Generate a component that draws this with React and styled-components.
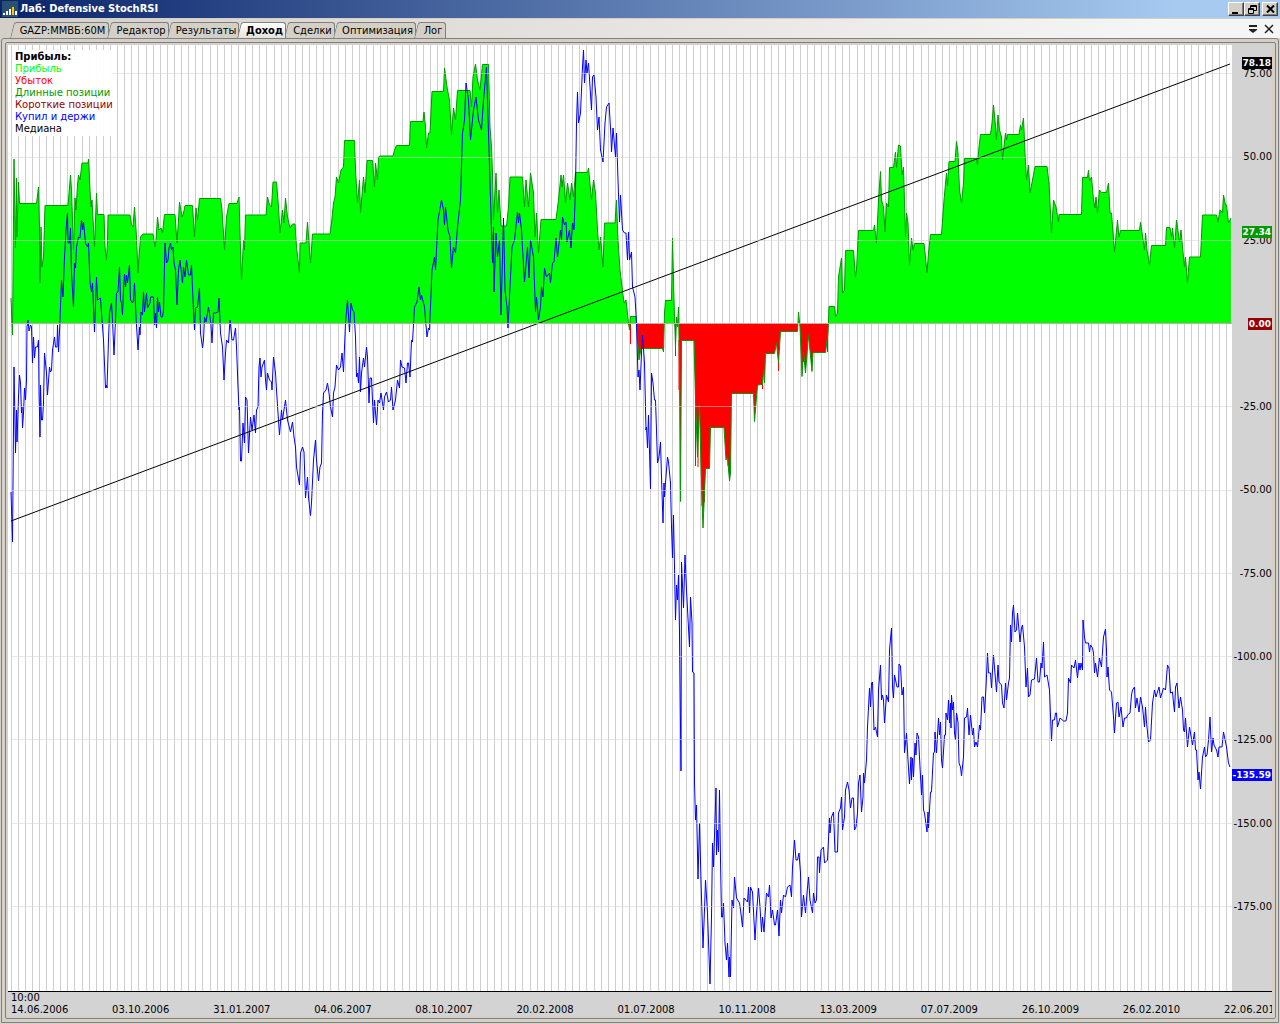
import { useState } from "react";
import styled, { createGlobalStyle, css } from "styled-components";

const GlobalStyle = createGlobalStyle`
  * {
    box-sizing: border-box;
  }

  body {
    margin: 0;
    background: #d4d0c8;
    font-family: "DejaVu Sans Condensed", "DejaVu Sans", sans-serif;
    font-size: 11px;
    color: #000;
  }

  button {
    font: inherit;
    color: inherit;
    padding: 0;
  }
`;

const Window = styled.div`
  display: flex;
  flex-direction: column;
  height: 100vh;
  min-height: 480px;
`;

const TitleBar = styled.header`
  flex: none;
  display: flex;
  align-items: center;
  gap: 2px;
  height: 18px;
  padding: 0 2px;
  background: linear-gradient(to right, #0a246a, #a6caf0 92%);
`;

const Title = styled.h1`
  flex: 1;
  margin: 0;
  font-size: 11px;
  line-height: 16px;
  color: #fff;
`;

const WindowButtons = styled.div`
  display: flex;
`;

const WindowButton = styled.button`
  display: flex;
  align-items: center;
  justify-content: center;
  width: 16px;
  height: 14px;
  margin-left: ${(props) => (props.$apart ? "2px" : "0")};
  border: 1px solid;
  border-color: #fff #404040 #404040 #fff;
  background: #d4d0c8;
  box-shadow: inset -1px -1px 0 #808080;
`;

const TabStrip = styled.nav`
  flex: none;
  display: flex;
  align-items: flex-end;
  height: 20px;
  padding: 0 6px 0 12px;
  border-top: 1px solid #d4d0c8;
  background: linear-gradient(to right, #d4d0c8, #f5f5f5 90%);
`;

const Tab = styled.button`
  position: relative;
  z-index: 0;
  flex: none;
  width: ${(props) => props.$width}px;
  height: 16px;
  padding-left: 4px;
  border: 0;
  background: none;
  line-height: 15px;
  white-space: nowrap;

  &::before,
  &::after {
    content: "";
    position: absolute;
    z-index: -1;
    top: 0;
    bottom: 0;
    border-top: 1px solid #808080;
    background: #d4d0c8;
  }

  &::before {
    left: 0;
    width: 12px;
    border-left: 1px solid #808080;
    border-top-left-radius: 3px;
    transform: skewX(-14deg);
  }

  &::after {
    left: 5px;
    right: 0;
    border-right: 1px solid #808080;
    border-top-right-radius: 3px;
  }

  ${(props) =>
    props.$active &&
    css`
      z-index: 1;
      font-weight: bold;

      &::before,
      &::after {
        background: linear-gradient(#fff, #e4e2dc);
      }
    `}
`;

const StripTools = styled.div`
  display: flex;
  align-items: center;
  gap: 6px;
  height: 18px;
  margin-left: auto;
`;

const StripButton = styled.button`
  display: flex;
  border: 0;
  background: none;
`;

const Frame = styled.main`
  flex: 1;
  display: flex;
  min-height: 0;
  margin: 0 1px 1px;
  padding: 3px 2px 3px 3px;
  border: 1px solid #808080;
  border-radius: 3px 3px 0 0;
`;

const Panel = styled.section`
  flex: 1;
  display: flex;
  flex-direction: column;
  min-width: 0;
  padding: 2px 3px 2px 2px;
  border: 1px solid #808080;
  border-radius: 2px;
  font-family: "DejaVu Sans", sans-serif;
  font-size: 10px;
  line-height: 12px;
`;

const ChartRow = styled.div`
  flex: 1;
  display: flex;
  min-height: 0;
  border-bottom: 1px solid #000;
`;

const Plot = styled.div`
  position: relative;
  flex: 1;
  display: flex;
  min-width: 0;
  background: #fff;
`;

const Drawing = styled.svg`
  flex: 1;
  min-width: 0;
  height: 100%;
`;

const Legend = styled.ul`
  position: absolute;
  top: 5px;
  left: 4px;
  margin: 0;
  padding: 1px 0 1px 3px;
  list-style: none;
  background: rgba(255, 255, 255, 0.95);
`;

const LegendItem = styled.li`
  color: ${(props) => props.$color};
  font-weight: ${(props) => (props.$bold ? "bold" : "normal")};
`;

const PriceAxis = styled.div`
  position: relative;
  flex: none;
  display: flex;
  flex-direction: column;
  justify-content: space-between;
  width: 40px;
  padding: 23px 0 78px;
  background: #d3d3d3;
  text-align: right;
`;

const Badge = styled.div`
  position: absolute;
  right: 0;
  height: 12px;
  margin-top: -6px;
  padding: 0 1px;
  background: ${(props) => props.$color};
  color: #fff;
  font-size: 9px;
  font-weight: bold;
`;

const DateAxis = styled.div`
  flex: none;
  padding-left: 3px;
  background: #d3d3d3;
`;

const Dates = styled.div`
  display: flex;
`;

const DateLabel = styled.div`
  flex: 1;
  min-width: 0;
  overflow: hidden;

  &:last-child {
    flex: 0 0 48px;
  }
`;

const TABS = [
  { label: "GAZP:ММВБ:60М", width: 97 },
  { label: "Редактор", width: 60 },
  { label: "Результаты", width: 70 },
  { label: "Доход", width: 47 },
  { label: "Сделки", width: 49 },
  { label: "Оптимизация", width: 81 },
  { label: "Лог", width: 30 },
];

const LEGEND = [
  { label: "Прибыль:", color: "#000", bold: true },
  { label: "Прибыль", color: "#00ff00" },
  { label: "Убыток", color: "#ff0000" },
  { label: "Длинные позиции", color: "#009900" },
  { label: "Короткие позиции", color: "#990000" },
  { label: "Купил и держи", color: "#0000ff" },
  { label: "Медиана", color: "#000" },
];

const LEVELS = [75, 50, 25, 0, -25, -50, -75, -100, -125, -150, -175];

const BADGES = [
  { value: 78.18, color: "#000" },
  { value: 27.34, color: "#009900" },
  { value: 0, color: "#990000" },
  { value: -135.59, color: "#0000ff" },
];

const DATES = [
  "14.06.2006",
  "03.10.2006",
  "31.01.2007",
  "04.06.2007",
  "08.10.2007",
  "20.02.2008",
  "01.07.2008",
  "10.11.2008",
  "13.03.2009",
  "07.07.2009",
  "26.10.2009",
  "26.02.2010",
  "22.06.2010",
];

// drawing units: the plot spans x 8..1232 and y 45..991
const ZERO = 323.5;
const UNIT = 3.33;
const levelY = (value) => ZERO - value * UNIT;
const levelTop = (value) => `${((levelY(value) - 45) / 946) * 100}%`;

const GRID = Array.from({ length: 172 }, (_, i) => Math.floor(11 + i * 7.11));

const PROFIT = `11,298 12.5,335 14,159 15.5,248 16.5,178 17,237 18.5,182 19.5,203.5
36.5,203.5 38.5,187 39.5,230 40,283 41,227 42,267 43.5,257 45,205.5 68,205.5 70.5,175
71.5,190 73.5,250 75,198 76,210 77.5,185 78.5,175 80,180 82,163 88,163 88.5,159 90,190
91,207 92,200 94.5,247 96.5,193 97.5,215 99,214.5 104,214.5 105,247 106.5,260 107.5,240
108,215 130,215 131.5,225 133,227 134.5,207 136.5,237 138,273 139,257 140.5,237 143,234
153,234 155,247 156,240 157.5,217 159,230 161,228 162.5,233 164.5,214.5 175,214.5
177,243 178.5,220 179.5,202 182,217 183.5,213 185,205.5 192.5,205.5 194.5,237 196,208
197.5,220 199.5,198.5 220.5,198.5 222,210 224.5,250 226.5,217 229,203.5 237,203.5
239,197 240,233 241.5,280 243.5,240 244.5,250 245.5,215 266,215 267.5,197 269.5,205
271.5,207 273,182 276.5,182 278.5,207 280,233 282.5,210 284,223 285.5,198 287.5,217
290,228 292.5,224 295,224 296.5,247 299.5,273 300,243 306,243 307.5,222 310.5,263
312.5,234 330,234 331.5,223 333.5,203 335,197 336.5,177 338.5,183 341,170 343.5,167
344.5,140.5 354.5,140.5 355.5,170 357.5,203 359.5,180 360.5,213 363.5,177 365,193
367,160.5 372.5,160.5 374.5,187 375.5,163 377.5,180 378.5,157 380,156 393,156 394.5,150
396.5,145.5 409.5,145.5 410.5,121.5 423,121.5 424,112 425.5,127 426.5,148 428.5,133
430,133 432,91.5 443.5,91.5 444.5,68 447,87 449.5,100 451.5,135 453.5,108 455.5,120
457.5,90.5 470,90.5 471.5,107 473,77 475.5,64 477.5,80 480,90 482.5,64.5 488.5,64.5
490,127 491.5,147 492.5,173 493.5,220 496,173 497.5,213 499,190 501,226 506.5,226
508.5,207 510,177 522.5,177 524.5,207 526,180 528.5,207 530.5,173 533.5,193 535,237
536.5,213 538.5,253 541,219.5 556,219.5 558.5,200 561,175 562,187 563.5,175 565.5,203
567.5,183 570,200 571.5,183 573.5,197 575.5,172.5 587.5,172.5 588.5,168 591.5,200
593.5,180 595.5,193 597.5,230 599,250 600.5,237 603,267 604.5,223 615,223 616.5,200
618,240 620,270 622,287 624,303 626,300 628.5,323 629.5,330 630.5,316.5 636,316.5
636.5,323.5 639,360 641,348.5 662.5,348.5 663.5,352 664.5,313 665.5,300.5 671.5,300.5
672.5,238 674,300 675.5,347 676.5,317 677.5,327 678.5,307 679.5,367 680.5,501.5
681.5,340.5 694,340.5 695.5,400 697.5,457 699.5,403 701,467 703,528 704.5,493
705.5,468.5 709.5,468.5 710.5,427.5 724,427.5 726,460 727.5,457 729.5,481 730.5,473
731.5,393.5 753.5,393.5 754.5,421.5 757.5,385 762.5,384.5 763.5,370 764.5,383
765.5,353.5 774.5,353.5 776.5,343 778.5,363 780.5,331.5 797.5,331.5 798.5,312 800,327
802,376.5 803.5,352 805.5,373 808.5,335 812,371.5 813,352.5 825.5,352.5 828,333
829,306.5 834.5,306.5 835.5,317 837.5,313 838.5,277 841.5,258 842.5,293 844.5,290
845.5,250.5 853.5,250.5 855.5,277 856.5,270 858.5,230.5 873.5,230.5 874.5,225 876.5,243
878.5,200 880.5,171.5 881.5,200 883.5,207 885,232 886.5,203 888.5,207 889.5,167.5
893.5,167.5 895.5,152 896.5,168 898.5,145 900.5,146 902,175 903.5,167 905.5,237
906.5,213 908,223 909.5,265 911.5,238 913,250 914.5,243.5 924,243.5 925.5,257 927,273
928.5,253 930.5,234.5 941.5,234.5 944,200 946.5,173 947.5,186 949,161.5 955,161.5
956.5,141.5 958,153 959.5,190 961.5,203 963.5,183 964.5,158.5 976.5,158.5 977.5,165
979,147 980.5,134.5 990.5,134.5 992,123 993.5,105 995,120 996.5,140 998,115 999.5,130
1001.5,137 1002.5,160 1005.5,133 1006.5,140 1007.5,134.5 1019,134.5 1020.5,125
1021.5,130 1023.5,118 1025,153 1026.5,180 1028.5,165 1030,193 1032.5,180 1035,166.5
1047,166.5 1049,183 1051.5,233 1053.5,200 1056,207 1058.5,222 1059,214.5 1081.5,214.5
1082.5,177.5 1087.5,177.5 1088.5,170 1089.5,181 1091.5,177 1093.5,200 1095,208
1096,197 1097.5,213 1099.5,190 1101.5,192.5 1106.5,192.5 1108.5,183 1110,213
1111.5,213 1114.5,252 1117.5,220 1119,237 1120.5,230.5 1139.5,230.5 1140.5,222
1144.5,250 1145.5,233 1147,250 1149.5,265 1151.5,245.5 1165.5,245.5 1166.5,227.5
1170,227.5 1171.5,237 1172.5,228 1174.5,248 1176.5,220 1179.5,242 1181,230 1182.5,247
1184.5,267 1185.5,257 1187.5,283 1189.5,257 1200.5,257 1202.5,215 1216.5,215 1218,222
1220,210 1222.5,213 1223.5,195 1225.5,205 1226.5,205 1228.5,223 1231,218`;

const BUY_AND_HOLD = `11,492 12.5,542 14,367 15.5,453 16.5,410 17,442 18.5,397 19.5,375
20.5,383 21.5,413 22,407 22.5,428 23.5,413 24.5,388 25.5,400 26.5,380 27,327 28,320
29,331 30.5,325 31.5,327 32.5,363 33.5,337 34.5,358 35.5,347 37.5,347 38.5,340 39,390
40,437 40.5,385 41.5,420 42.5,420 43.5,403 44.5,353 46.5,373 47.5,395 49.5,367
50.5,372 51.5,370 52.5,350 54.5,337 55.5,347 57,347 57.5,325 58.5,352 60,320 61.5,280
63,297 64.5,257 66,230 67.5,213 68,243 69.5,243 70.5,228 71.5,273 73.5,307 74.5,263
75.5,268 76.5,247 78.5,237 80,238 81.5,220 82.5,230 83.5,222 85.5,243 87.5,247
88.5,243 90,283 91.5,292 92.5,283 94.5,332 96.5,277 97.5,300 100.5,298 101.5,313
103.5,340 105.5,388 106.5,385 107,388 108.5,340 109.5,313 111.5,303 112.5,320 114,355
115.5,320 116.5,293 118,292 119.5,267 120.5,300 121.5,303 122.5,315 123.5,290
124.5,274 125.5,287 126.5,275 127.5,283 129.5,265 130.5,300 132.5,303 133.5,300
134.5,283 136,317 138,350 139.5,327 140,335 141,312 142.5,315 143.5,292 144.5,312
146.5,293 147.5,308 150,303 150.5,297 153.5,297 154.5,325 155.5,313 156.5,328
157.5,297 158.5,312 159.5,302 161,317 162.5,317 163.5,310 165,243 166.5,263 168,260
169,248 170.5,243 171.5,250 173,247 174,263 175.5,270 177,305 178.5,270 180,260
182.5,283 183.5,267 185,277 186.5,260 188.5,275 190.5,275 191.5,265 193,300 194.5,330
195.5,308 197.5,307 199.5,288 200.5,333 202.5,348 203.5,340 204.5,317 206,322
208.5,307 210,317 211,325 212,343 213.5,313 215.5,313 218,312 219,298 220.5,333
222.5,347 224,380 225.5,353 226.5,340 228.5,343 230,320 232,340 233.5,340 235.5,328
236.5,347 238,387 239,410 239.5,407 240.5,461 241.5,461 243,423 244.5,443 245.5,397
247,400 248.5,453 250.5,417 252,430 254,415 255.5,433 256.5,410 258,407 259,367
260,358 261,377 262,367 264.5,360 265.5,380 266.5,390 267.5,373 269.5,380 271.5,382
272,390 273.5,357 275.5,373 276.5,390 278,413 279.5,435 281.5,410 282.5,420 283.5,413
285.5,400 287.5,420 289.5,428 290.5,432 292.5,422 294,437 295.5,447 296.5,467
299.5,485 300.5,453 302.5,447 304,452 305.5,498 307.5,477 308.5,497 310.5,515.5
311.5,503 313.5,460 315.5,440 316.5,460 318.5,481 320,467 321.5,463 322.5,413
323.5,393 326,390 327.5,383 329,393 330.5,407 332.5,417 333.5,393 335,387 336.5,365
338.5,370 340.5,367 342,353 343.5,372 345.5,323 347.5,300 349.5,332 351,303 352.5,310
354,312 355.5,337 356.5,377 357.5,373 358.5,383 359.5,357 360.5,392 361.5,373
363.5,358 364.5,367 366.5,347 367.5,357 369,403 370,378 371.5,378 373.5,423 374.5,400
376.5,425 378,400 379.5,403 381,393 383.5,410 384.5,397 386.5,392 388.5,402 390.5,400
391.5,387 393,410 395.5,400 397.5,380 399.5,388 400.5,360 402,367 404.5,368 406,383
407.5,363 408.5,363 410,377 411.5,340 412.5,342 414.5,307 417,302 419,287 420.5,300
421.5,295 424.5,307 425.5,320 427,337 428.5,328 429.5,330 432,270 434.5,257 435.5,270
438,220 441.5,200 443.5,210 444.5,225 445.5,207 448,230 450,237 451.5,268 453.5,247
455.5,253 457.5,227 460.5,200 462.5,133 464.5,120 466,83 468.5,100 470.5,140
473.5,110 476,97 478.5,120 481.5,130 483.5,100 486.5,67 488,117 490,183 492.5,263
493.5,227 494,292 496,233 497.5,257 499.5,240 501,315 503.5,218 505,290 507,307
508,328 510,287 512,247 514.5,240 517.5,212 518.5,223 519.5,213 521.5,230 524.5,282
527.5,247 529,278 530.5,240 533.5,257 535.5,312 536.5,297 538.5,320 540.5,307
541.5,287 543,297 544.5,268 546.5,277 549.5,273 550.5,283 552.5,263 554,262 556,238
557.5,257 560.5,230 561.5,240 562.5,217 564.5,225 566,222 567,242 569.5,230 571,248
572.5,223 574,230 575.5,187 576.5,123 577.5,92 578.5,123 580.5,113 582.5,67 583.5,50
584.5,83 586,60 587,73 588.5,63 591.5,110 592.5,77 594,75 596,97 597.5,130 599,117
600.5,150 603,162 605,123 606.5,107 609,103 611,137 611.5,152 613,128 615.5,157
616.5,133 618,180 619.5,222 620.5,195 622.5,230 624.5,233 626,233 627.5,260 628.5,232
629.5,260 631.5,252 632.5,287 635,297 636.5,323 638,377 639,370 640,390 641.5,353
642.5,335 644.5,363 646,430 646.5,427 647.5,448 648.5,415 650.5,489 651.5,373 653,383
654.5,400 655.5,400 656.5,430 657.5,463 659,457 660.5,442 661.5,477 663,523 664,483
664.5,497 665.5,483 667.5,457 668.5,462 670.5,483 671.5,527 672.5,558 673.5,515
675.5,620 676.5,585 677.5,600 678.5,575 679.5,633 681,771 681.5,562 683.5,608 685,555
686.5,590 689.5,647 690.5,597 692,623 692.5,672 694,673 694.5,783 695.5,820 696.5,805
698,879 699.5,823 701,880 703,948 704.5,910 705.5,880 707.5,913 710,984 711.5,917
712.5,843 713.5,867 716,788 716.5,855 717.5,830 718.5,852 719.5,790 720.5,860
721.5,917 722.5,917 723.5,903 725,943 726.5,960 727.5,943 729,977 729.5,957 730.5,977
732,900 733.5,908 734.5,877 736.5,898 739.5,903 740.5,910 742.5,927 744,898 747.5,902
748.5,887 749.5,913 750.5,887 752.5,892 755,940 756.5,913 758.5,888 760,907 761.5,932
762.5,917 764,932 766.5,893 768.5,897 769.5,885 771,918 772.5,910 774.5,925 775.5,925
777.5,910 779,936 780.5,900 781.5,913 783.5,895 785.5,897 787.5,887 790,885 791.5,897
792.5,867 794.5,840 796,860 797.5,860 799,853 800.5,873 801.5,917 803.5,895 805.5,913
807,893 808.5,877 810,900 812.5,913 813.5,893 815,903 816.5,900 817.5,857 819,857
819.5,873 821,850 823.5,847 824.5,863 827.5,860 829.5,818 830,833 831.5,817 833.5,812
835,852 837.5,852 838.5,813 840.5,808 841.5,797 842.5,830 844.5,817 845.5,790
847.5,782 849,790 850.5,808 852,798 853.5,798 854.5,830 856,827 857.5,813 858.5,783
860,775 861.5,812 863,797 863.5,773 864.5,783 866.5,760 867.5,727 869.5,688 870.5,707
871.5,683 872.5,682 874,730 875.5,727 877.5,737 878.5,690 880.5,665 881.5,700
882.5,695 883.5,700 884.5,723 886.5,695 888.5,702 889.5,650 891.5,628 892.5,687
893.5,698 894.5,675 897,687 898.5,687 899,664 900.5,666 902,695 903.5,687 904.5,753
906.5,733 908,760 909.5,784 911,757 911.5,780 912.5,758 913.5,777 915,743 916,755
917,733 918.5,737 920,767 921.5,795 922.5,775 923.5,810 924.5,813 927,832 928,812
928.5,828 930.5,792 931.5,792 933.5,753 934.5,752 935,732 936.5,753 938.5,718
939.5,735 940.5,722 941.5,760 942.5,768 944.5,735 945.5,735 946,713 947.5,720
948.5,700 949.5,723 950.5,703 951,728 951.5,695 952.5,710 953.5,702 954.5,733
955.5,740 956.5,713 958,722 959,763 960.5,767 961.5,776 963.5,757 964.5,718 966.5,717
967.5,708 969,735 970.5,715 972.5,735 973.5,728 974.5,747 976,742 977.5,747 979.5,725
980.5,730 982,697 983.5,697 984.5,713 986,687 987.5,653 988.5,673 990.5,673 991.5,688
992.5,670 993.5,655 995.5,680 996.5,692 998,665 999,682 1001.5,685 1002.5,703
1004,708 1005.5,683 1006.5,700 1008.5,683 1009.5,678 1010.5,625 1011.5,642 1012.5,613
1013.5,605 1015,632 1016.5,630 1017.5,613 1020,642 1021.5,628 1022.5,625 1024.5,647
1026,687 1027.5,668 1028.5,697 1030,695 1031.5,680 1034.5,679 1036.5,658 1038,682
1039.5,682 1041,663 1042,668 1043.5,642 1044.5,677 1047,675 1049.5,690 1051.5,741
1052.5,720 1054.5,720 1055.5,713 1056.5,713 1057.5,727 1060,718 1063.5,721 1066,721
1067.5,713 1068.5,678 1070.5,683 1071.5,665 1074,668 1075.5,660 1077.5,678 1079,663
1080,670 1081,663 1082.5,670 1083,620 1084.5,637 1085.5,643 1088.5,643 1089.5,652
1090.5,645 1092.5,648 1093.5,653 1094.5,673 1095.5,663 1097.5,677 1099.5,658
1101.5,667 1103.5,637 1105.5,629 1106.5,650 1107,677 1108,667 1109.5,690 1111.5,692
1113.5,717 1114.5,733 1116.5,703 1118,702 1119,717 1121,707 1123,727 1124.5,718
1126.5,718 1127.5,715 1130,713 1131.5,695 1132.5,690 1134.5,687 1135.5,708 1137,698
1139,712 1140.5,697 1142.5,707 1144.5,727 1145.5,707 1146.5,722 1148.5,742 1150.5,740
1152.5,703 1154.5,690 1156,697 1159,687 1160.5,698 1163.5,688 1165.5,690 1167.5,665
1169,668 1170.5,693 1172.5,692 1173.5,703 1174.5,712 1175.5,687 1177,683 1179,708
1180.5,697 1182.5,710 1183.5,730 1184.5,732 1185.5,718 1187.5,747 1189.5,727
1192.5,745 1194.5,732 1195.5,750 1196.5,750 1198,780 1199,772 1200.5,789 1202.5,757
1204.5,747 1205.5,757 1207,755 1208.5,740 1210,717 1211.5,752 1213,738 1214,745
1216.5,750 1218,757 1219,747 1222,747 1223.5,732 1226.5,747 1228.5,763 1230,767`;

// short dips that the loss columns reach below the equity line
const LOSS_DIPS =
  "M630.5 324V344M675.5 324V356M679 340V390M695.5 380V466M698 400V467M702 440V506M704.5 440V502M728 430V466M754.5 393V414M762.5 384V389M778.5 353V371M803.5 352V362M806 352V362M827.5 335V352";

function Chart() {
  return (
    <Drawing viewBox="8 45 1224 946" preserveAspectRatio="none" role="img">
      <title>Доход</title>
      <clipPath id="above">
        <rect x="8" y="45" width="1224" height="278.5" />
      </clipPath>
      <clipPath id="below">
        <rect x="8" y="323.5" width="1224" height="668" />
      </clipPath>
      {GRID.map((x) => (
        <path key={x} d={`M${x + 0.5} 45V991`} stroke="#cfcfcf" />
      ))}
      <polygon
        points={`11,${ZERO} ${PROFIT} 1231,${ZERO}`}
        fill="#00ff00"
        clipPath="url(#above)"
      />
      <polygon
        points={`11,${ZERO} ${PROFIT} 1231,${ZERO}`}
        fill="#ff0000"
        clipPath="url(#below)"
      />
      <path d={LOSS_DIPS} stroke="#ff0000" />
      <polyline points={PROFIT} fill="none" stroke="#009900" />
      <polyline points={BUY_AND_HOLD} fill="none" stroke="#0000ff" />
      <path d="M11 521L1230 64" stroke="#000" />
      {LEVELS.map((level) => (
        <path
          key={level}
          d={`M11 ${Math.floor(levelY(level)) + 0.5}H1232`}
          stroke={level ? "#d3d3d3" : "#c8a8a8"}
          strokeOpacity={level ? 0.55 : 1}
        />
      ))}
    </Drawing>
  );
}

function App() {
  const [active, setActive] = useState("Доход");

  return (
    <>
      <GlobalStyle />
      <Window>
        <TitleBar>
          <svg width="16" height="16" viewBox="0 0 16 16">
            <rect width="16" height="16" fill="#285070" />
            <path d="M1 12h2v2H1zM4 10h2v4H4zM7 8h2v6H7zM13 10h2v4h-2z" fill="#fff" />
            <path d="M10 6h2v8h-2z" fill="#ffc800" />
          </svg>
          <Title>Лаб: Defensive StochRSI</Title>
          <WindowButtons>
            <WindowButton aria-label="Свернуть">
              <svg width="10" height="9">
                <path d="M1 7h6v2H1z" />
              </svg>
            </WindowButton>
            <WindowButton aria-label="Восстановить">
              <svg width="9" height="9" fill="none" stroke="#000">
                <path d="M2.5 3V.5h6v5H6M2.5 1.5h6M.5 3.5h5v5h-5zM.5 4.5h5" />
              </svg>
            </WindowButton>
            <WindowButton aria-label="Закрыть" $apart>
              <svg width="9" height="8" stroke="#000" strokeWidth="2">
                <path d="M1 .5l7 7M8 .5l-7 7" />
              </svg>
            </WindowButton>
          </WindowButtons>
        </TitleBar>
        <TabStrip>
          {TABS.map((tab) => (
            <Tab
              key={tab.label}
              $width={tab.width}
              $active={tab.label === active}
              onClick={() => setActive(tab.label)}
            >
              {tab.label}
            </Tab>
          ))}
          <StripTools>
            <StripButton aria-label="Список вкладок">
              <svg width="10" height="10" fill="#222">
                <path d="M1 1h8v2H1zM1 5h8v1L5 9 1 6z" />
              </svg>
            </StripButton>
            <StripButton aria-label="Закрыть вкладку">
              <svg width="10" height="10" stroke="#222" strokeWidth="1.5">
                <path d="M1 1l8 8M9 1L1 9" />
              </svg>
            </StripButton>
          </StripTools>
        </TabStrip>
        <Frame>
          <Panel>
            <ChartRow>
              <Plot>
                <Chart />
                <Legend>
                  {LEGEND.map((item) => (
                    <LegendItem
                      key={item.label}
                      $color={item.color}
                      $bold={item.bold}
                    >
                      {item.label}
                    </LegendItem>
                  ))}
                </Legend>
              </Plot>
              <PriceAxis>
                {LEVELS.map((level) => (
                  <div key={level}>{level.toFixed(2)}</div>
                ))}
                {BADGES.map((badge) => (
                  <Badge
                    key={badge.value}
                    $color={badge.color}
                    style={{ top: levelTop(badge.value) }}
                  >
                    {badge.value.toFixed(2)}
                  </Badge>
                ))}
              </PriceAxis>
            </ChartRow>
            <DateAxis>
              <div>10:00</div>
              <Dates>
                {DATES.map((date) => (
                  <DateLabel key={date}>{date}</DateLabel>
                ))}
              </Dates>
            </DateAxis>
          </Panel>
        </Frame>
      </Window>
    </>
  );
}

export default App;
